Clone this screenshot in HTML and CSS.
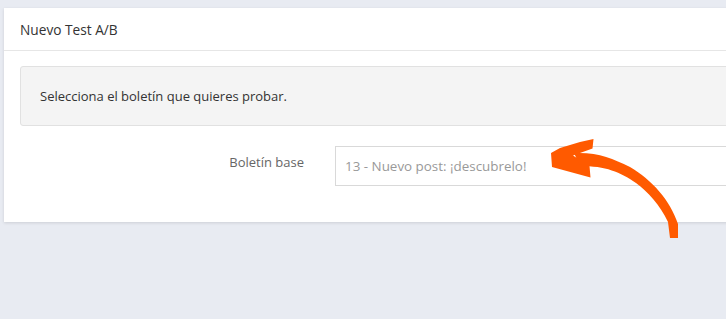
FILE: index.html
```html
<!DOCTYPE html>
<html lang="es">
<head>
<meta charset="utf-8">
<link rel="stylesheet" href="styles.css">
</head>
<body>
<div class="card">
  <div class="card-header">Nuevo Test A/B</div>
  <div class="card-body">
    <div class="alert">Selecciona el boletín que quieres probar.</div>
    <div class="form-row">
      <label class="label">Boletín base</label>
      <div class="input">13 - Nuevo post: ¡descubrelo!</div>
    </div>
  </div>
</div>
<svg class="arrow" viewBox="0 0 726 319" width="726" height="319">
  <path fill="#ff5a00" d="M593.5 139 L592.5 148.5 L573 155.5 L589.5 166 L590.5 177.5 L552 167 L551 153 L560 148 L580 142 Z"/>
  <path fill="#ff5a00" d="M574 153 C598 152 612 158 630 167 C652 180 670 200 678 224 L678 238 L670 238 L668 222 C660 205 648 192 636 183 C620 172 606 166 580 166 Z"/>
</svg>
</body>
</html>
```
FILE: styles.css
```css
html, body {
  margin: 0;
  padding: 0;
}
body {
  background: #e8ebf2;
  width: 726px;
  height: 319px;
  overflow: hidden;
  position: relative;
  font-family: "Open Sans", "Noto Sans", sans-serif;
  font-size: 13px;
  color: #333;
}
.card {
  margin: 8px 0 0 4px;
  width: 760px;
  background: #fff;
  box-shadow: 0 1px 3px rgba(0,0,0,0.12);
}
.card-header {
  height: 43px;
  box-sizing: border-box;
  padding: 0 16px;
  display: flex;
  align-items: center;
  border-bottom: 1px solid #e6e6e6;
  color: #333;
  font-size: 13.7px;
}
.card-body {
  padding: 15px 0 36px 16px;
}
.alert {
  box-sizing: border-box;
  height: 60px;
  background: #f4f4f4;
  border: 1px solid #e1e1e1;
  border-radius: 3px;
  padding: 0 19px;
  display: flex;
  align-items: center;
  color: #333;
}
.form-row {
  display: flex;
  margin-top: 20px;
  align-items: flex-start;
}
.label {
  width: 284px;
  text-align: right;
  color: #666;
  padding-top: 7px;
}
.input {
  margin-left: 31px;
  flex: 1;
  height: 40px;
  box-sizing: border-box;
  border: 1px solid #d9d9d9;
  padding: 0 9px;
  display: flex;
  align-items: center;
  color: #999;
  font-size: 13.4px;
}
.arrow {
  position: absolute;
  left: 0;
  top: 0;
  pointer-events: none;
}
```
